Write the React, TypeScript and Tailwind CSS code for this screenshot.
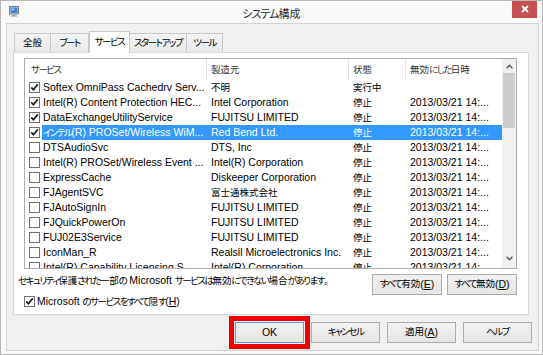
import React from "react";

type Row = {
  name: string;
  maker: string;
  status: string;
  date: string;
  checked?: boolean;
  selected?: boolean;
};

const D = "2013/03/21 14:...";

const rows: Row[] = [
  { name: "Softex OmniPass Cachedrv Serv...", maker: "不明", status: "実行中", date: "", checked: true },
  { name: "Intel(R) Content Protection HEC...", maker: "Intel Corporation", status: "停止", date: D, checked: true },
  { name: "DataExchangeUtilityService", maker: "FUJITSU LIMITED", status: "停止", date: D, checked: true },
  { name: "インテル(R) PROSet/Wireless WiM...", maker: "Red Bend Ltd.", status: "停止", date: D, checked: true, selected: true },
  { name: "DTSAudioSvc", maker: "DTS, Inc", status: "停止", date: D },
  { name: "Intel(R) PROSet/Wireless Event ...", maker: "Intel(R) Corporation", status: "停止", date: D },
  { name: "ExpressCache", maker: "Diskeeper Corporation", status: "停止", date: D },
  { name: "FJAgentSVC", maker: "富士通株式会社", status: "停止", date: D },
  { name: "FJAutoSignIn", maker: "FUJITSU LIMITED", status: "停止", date: D },
  { name: "FJQuickPowerOn", maker: "FUJITSU LIMITED", status: "停止", date: D },
  { name: "FUJ02E3Service", maker: "FUJITSU LIMITED", status: "停止", date: D },
  { name: "IconMan_R", maker: "Realsil Microelectronics Inc.", status: "停止", date: D },
  { name: "Intel(R) Capability Licensing S...", maker: "Intel(R) Corporation", status: "停止", date: D },
];

const tabs = [
  { label: "全般", w: "w-[37px]" },
  { label: "ブート", w: "w-[38px]" },
  { label: "サービス", w: "w-[41px]", active: true },
  { label: "スタートアップ", w: "w-[57px]" },
  { label: "ツール", w: "w-[36px]" },
];

// Meiryo UI look: kanji a bit smaller than Latin, kana narrower still
const J = ({ t }: { t: string }) => (
  <>
    {(t.match(/[\u3040-\u30ff]+|[\u3000-\u303f\u4e00-\u9fff\uff00-\uffef]+|[^\u3000-\u30ff\u4e00-\u9fff\uff00-\uffef]+/g) || []).map(
      (s, i) => {
        const c = s.charCodeAt(0);
        if (c >= 0x3040 && c <= 0x30ff)
          return (
            <span key={i} className="text-[9.5px] tracking-[-1.5px]">
              {s}
            </span>
          );
        if (c >= 0x3000)
          return (
            <span key={i} className="text-[9.5px]">
              {s}
            </span>
          );
        return s;
      }
    )}
  </>
);

const Check = ({ checked }: { checked?: boolean }) => (
  <div className="w-[11px] h-[11px] shrink-0 border border-[#707070] bg-white flex items-center justify-center">
    {checked && (
      <svg width="9" height="9" viewBox="0 0 9 9">
        <path d="M1.3 4.4 L3.4 6.8 L7.8 1.4" fill="none" stroke="#1a1a1a" strokeWidth="1.7" />
      </svg>
    )}
  </div>
);

const Chevron = ({ down }: { down?: boolean }) => (
  <svg width="7" height="5" viewBox="0 0 7 5">
    <polyline
      points={down ? "0.6,0.8 3.5,3.8 6.4,0.8" : "0.6,4.2 3.5,1.2 6.4,4.2"}
      fill="none"
      stroke="#5a5a5a"
      strokeWidth="1.4"
    />
  </svg>
);

const Btn = ({ children, w, primary }: { children: React.ReactNode; w: string; primary?: boolean }) => (
  <button
    className={`${w} h-[21px] shrink-0 flex items-center justify-center whitespace-nowrap border bg-linear-to-b from-[#f2f2f2] to-[#e4e4e4] text-[10.5px] text-black ${
      primary ? "border-[#5a9fe3]" : "border-[#acacac]"
    }`}
  >
    {children}
  </button>
);

export default function App() {
  return (
    <div className="w-[543px] h-[355px] overflow-hidden bg-[#f9f9f9] border border-[#b8b8b8] flex flex-col text-black [font-family:'Liberation_Sans','Noto_Sans_CJK_JP',sans-serif] [font-feature-settings:'palt']">
      {/* title bar */}
      <div className="h-[22px] shrink-0 grid grid-cols-[1fr_auto_1fr]">
        <div className="pl-[8px] pt-[5px]">
          <svg width="10" height="11" viewBox="0 0 10 11">
            <rect x="0.5" y="0.5" width="9" height="7.5" fill="#d9e6f2" stroke="#6f7f95" />
            <rect x="1.5" y="1.5" width="7" height="5.5" fill="#3b7fc8" />
            <rect x="2.5" y="2.5" width="3" height="2" fill="#9cc8ef" />
            <rect x="3.5" y="8.5" width="3" height="1" fill="#6f7f95" />
            <rect x="2" y="9.5" width="6" height="1" fill="#8a96a6" />
          </svg>
        </div>
        <div className="pt-[6px] text-[11px] leading-[14px] text-[#2b2b2b]">
          <span className="tracking-[-1px]">システム</span>構成
        </div>
        <div className="flex justify-end pr-[5px]">
          <button className="-mt-[1px] w-[25px] h-[18px] bg-[#c75050] flex items-center justify-center">
            <svg width="8" height="8" viewBox="0 0 8 8">
              <path d="M1 1 L7 7 M7 1 L1 7" stroke="white" strokeWidth="1.8" />
            </svg>
          </button>
        </div>
      </div>

      {/* client area */}
      <div className="ml-[5px] w-[533px] h-[328px] border border-[#d2d2d2] bg-[#f0f0f0] flex flex-col">
        <div className="pl-[6px] pt-[7px] flex flex-col">
          {/* tabs */}
          <div className="ml-[1px] h-[21px] flex items-end">
            {tabs.map(t =>
              t.active ? (
                <div
                  key={t.label}
                  className={`${t.w} h-[22px] -mb-[1px] relative z-10 bg-white border border-b-0 border-[#c9c9c9] flex justify-center pt-[3px] whitespace-nowrap leading-[14px]`}
                >
                  <J t={t.label} />
                </div>
              ) : (
                <div
                  key={t.label}
                  className={`${t.w} h-[19px] bg-linear-to-b from-[#f3f3f3] to-[#e8e8e8] border border-b-0 border-l-0 first:border-l border-[#c9c9c9] flex justify-center pt-[2px] whitespace-nowrap leading-[14px]`}
                >
                  <J t={t.label} />
                </div>
              )
            )}
          </div>

          {/* tab panel */}
          <div className="w-[516px] h-[263px] border border-[#d9d9d9] bg-white flex flex-col">
            {/* list view */}
            <div className="ml-[10px] mt-[5px] w-[493px] h-[211px] border border-[#abadb3] flex overflow-hidden">
              <div className="w-[477px] flex flex-col text-[10.5px] leading-[15px]">
                <div className="h-[21px] shrink-0 flex text-[#333]">
                  <div className="w-[182px] pl-[6px] flex items-center border-r border-[#e5e5e5]">
                    <J t="サービス" />
                  </div>
                  <div className="w-[142px] pl-[4px] flex items-center border-r border-[#e5e5e5]">
                    <J t="製造元" />
                  </div>
                  <div className="w-[57px] pl-[4px] flex items-center border-r border-[#e5e5e5]">
                    <J t="状態" />
                  </div>
                  <div className="w-[96px] pl-[4px] flex items-center">
                    <J t="無効にした日時" />
                  </div>
                </div>
                {rows.map(r => (
                  <div key={r.name} className="h-[15px] shrink-0 flex">
                    <div className="w-[17px] pl-[4px] flex items-center">
                      <Check checked={r.checked} />
                    </div>
                    <div className={`flex-1 flex whitespace-nowrap ${r.selected ? "bg-[#3399ff] text-white" : ""}`}>
                      <div className="w-[165px] pl-[1px] overflow-hidden">
                        <J t={r.name} />
                      </div>
                      <div className="w-[142px] pl-[4px] overflow-hidden">
                        <J t={r.maker} />
                      </div>
                      <div className="w-[57px] pl-[4px] overflow-hidden">
                        <J t={r.status} />
                      </div>
                      <div className="w-[95px] pl-[4px] overflow-hidden">{r.date}</div>
                    </div>
                  </div>
                ))}
              </div>
              {/* scrollbar */}
              <div className="w-[14px] bg-[#f0f0f0] flex flex-col">
                <div className="h-[14px] flex items-center justify-center">
                  <Chevron />
                </div>
                <div className="mx-[1px] h-[55px] bg-[#cdcdcd]" />
                <div className="flex-1" />
                <div className="h-[16px] flex items-start justify-center pt-[4px]">
                  <Chevron down />
                </div>
              </div>
            </div>

            {/* note + enable/disable buttons */}
            <div className="mt-[5px] h-[21px] pl-[4px] pr-[11px] flex justify-between">
              <div className="text-[10.5px] leading-[13px] whitespace-nowrap">
                <J t="セキュリティ保護された一部の Microsoft サービスは無効にできない場合があります。" />
              </div>
              <div className="flex gap-[5px]">
                <Btn w="w-[70px]">
                  <J t="すべて有効" />(<u>E</u>)
                </Btn>
                <Btn w="w-[70px]">
                  <J t="すべて無効" />(<u>D</u>)
                </Btn>
              </div>
            </div>

            <div className="ml-[10px] h-[13px] flex items-center gap-[2px] text-[10.5px] whitespace-nowrap">
              <Check checked />
              <span>
                <J t="Microsoft のサービスをすべて隠す" />(<u>H</u>)
              </span>
            </div>
          </div>
        </div>

        {/* dialog buttons */}
        <div className="mt-[7px] pl-[228px] flex gap-[7px]">
          <div className="relative">
            <Btn w="w-[69px]" primary>
              OK
            </Btn>
            <div className="absolute -inset-[6px] border-[5px] border-[#ee0000]" />
          </div>
          <Btn w="w-[69px]">
            <J t="キャンセル" />
          </Btn>
          <Btn w="w-[69px]">
            <J t="適用" />(<u>A</u>)
          </Btn>
          <Btn w="w-[69px]">
            <J t="ヘルプ" />
          </Btn>
        </div>
      </div>
    </div>
  );
}
